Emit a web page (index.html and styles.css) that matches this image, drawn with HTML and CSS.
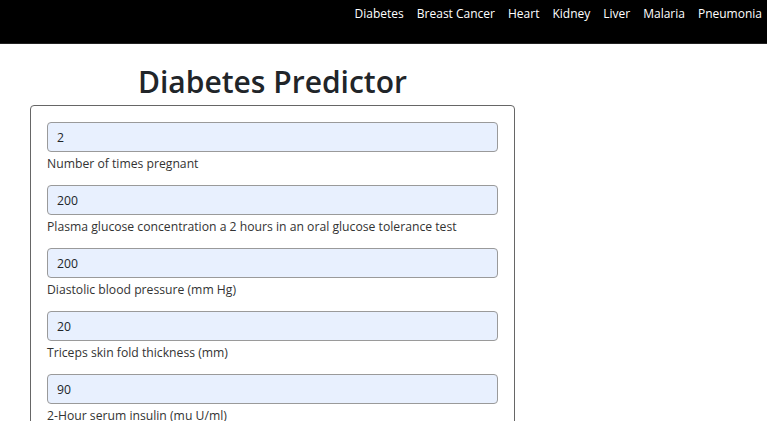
FILE: index.html
```html
<!DOCTYPE html>
<html lang="en">
<head>
<meta charset="utf-8">
<title>Diabetes Predictor</title>
<link rel="stylesheet" href="styles.css">
</head>
<body>
<nav class="navbar">
  <a href="#">Diabetes</a>
  <a href="#">Breast Cancer</a>
  <a href="#">Heart</a>
  <a href="#">Kidney</a>
  <a href="#">Liver</a>
  <a href="#">Malaria</a>
  <a href="#">Pneumonia</a>
</nav>
<main class="main">
  <h1 class="title">Diabetes Predictor</h1>
  <form class="card">
    <div class="group">
      <input class="field" type="text" value="2">
      <div class="hint">Number of times pregnant</div>
    </div>
    <div class="group">
      <input class="field" type="text" value="200">
      <div class="hint">Plasma glucose concentration a 2 hours in an oral glucose tolerance test</div>
    </div>
    <div class="group">
      <input class="field" type="text" value="200">
      <div class="hint">Diastolic blood pressure (mm Hg)</div>
    </div>
    <div class="group">
      <input class="field" type="text" value="20">
      <div class="hint">Triceps skin fold thickness (mm)</div>
    </div>
    <div class="group">
      <input class="field" type="text" value="90">
      <div class="hint">2-Hour serum insulin (mu U/ml)</div>
    </div>
  </form>
</main>
</body>
</html>
```

FILE: styles.css
```css
* { box-sizing: border-box; }

body {
  margin: 0;
  font-family: "Open Sans", "Noto Sans", sans-serif;
  color: #212529;
  background: #fff;
}

.navbar {
  display: flex;
  justify-content: flex-end;
  gap: 13px;
  height: 44px;
  padding: 5px 5px 0 0;
  background: #000;
  border-bottom: 1px solid #222;
}

.navbar a {
  color: #fff;
  text-decoration: none;
  font-size: 12px;
  line-height: 18px;
}

.main {
  width: 485px;
  margin-left: 30px;
}

.title {
  margin: 20px 0 5px;
  text-align: center;
  font-size: 30px;
  font-weight: 600;
  line-height: 36px;
  color: #212529;
}

.card {
  border: 1px solid #666;
  border-radius: 4px;
  padding: 16px 16px 0;
}

.group {
  margin-bottom: 12px;
}

.field {
  display: block;
  width: 100%;
  height: 30px;
  padding: 0 9px;
  border: 1px solid #9a9a9a;
  border-radius: 4px;
  background: #e8f0fe;
  font-family: inherit;
  font-size: 12.2px;
  color: #212529;
}

.hint {
  margin-top: 3px;
  font-size: 12.2px;
  line-height: 18px;
  color: #333;
}
```
